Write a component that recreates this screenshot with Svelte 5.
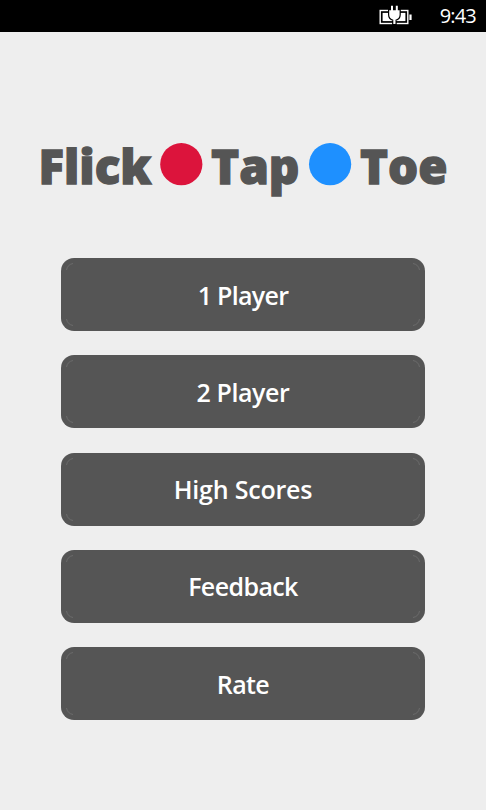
<script>
    const menuItems = [
        { label: "1 Player", spacing: -0.7 },
        { label: "2 Player", spacing: -0.4 },
        { label: "High Scores", spacing: -0.2 },
        { label: "Feedback", spacing: -0.6 },
        { label: "Rate", spacing: -0.6 },
    ];
    let time = "9:43";
</script>

<div class="phone">
    <header>
        <svg class="battery" width="34" height="22" viewBox="0 0 34 22">
            <rect x="1.2" y="7.5" width="27.6" height="13" fill="none" stroke="#fff" stroke-width="1.4" />
            <rect x="3.6" y="9.9" width="22.8" height="8.2" fill="#fff" />
            <rect x="30.4" y="11.5" width="2.2" height="5.5" fill="#fff" />
            <path
                d="M12 2.7v4.5h-1.8v4.6c0 2.4 1.6 4.3 4.1 4.9V21h2.2v-4.3c2.5-.6 4.1-2.5 4.1-4.9V7.2h-1.8V2.7h-2v4.5h-2.8V2.7z"
                fill="#fff"
                stroke="#000"
                stroke-width="2.4"
                paint-order="stroke"
            />
        </svg>
        <span class="time">{time}</span>
    </header>

    <main>
        <svg class="logo" width="410" height="64" viewBox="38 138 410 64" role="img" aria-label="Flick Tap Toe">
            <text x="38.4" y="184" textLength="113" lengthAdjust="spacingAndGlyphs">Flick</text>
            <circle cx="181.3" cy="164.2" r="21.1" fill="#dc143c" />
            <text x="211" y="184" textLength="88.5" lengthAdjust="spacingAndGlyphs">Tap</text>
            <circle cx="330.1" cy="164.2" r="21.1" fill="#1e90ff" />
            <text x="360" y="184" textLength="87.5" lengthAdjust="spacingAndGlyphs">Toe</text>
        </svg>

        <nav>
            {#each menuItems as { label, spacing }}
                <button>
                    <span class="inner" style="letter-spacing: {spacing}px">{label}</span>
                    <svg class="corners" viewBox="0 0 364 73">
                        <path d="M5.5 12Q6.5 6.5 12 5.5M352 5.5q5.500 1 6.500 6.500M358.500 61q-1 5.500-6.500 6.500M12 67.500q-5.500-1-6.500-6.500" />
                    </svg>
                </button>
            {/each}
        </nav>
    </main>
</div>

<style>
    :global(body) {
        margin: 0;
        background: #eee;
    }
    .phone {
        width: 486px;
        height: 810px;
        overflow: hidden;
        background: #eee;
        font-family: "Open Sans", "Noto Sans", sans-serif;
    }
    header {
        display: flex;
        justify-content: flex-end;
        box-sizing: border-box;
        height: 32px;
        padding-right: 10px;
        background: #000;
        color: #fff;
    }
    .battery {
        margin: 3px 27px 0 0;
    }
    .time {
        font-size: 20px;
        line-height: 32px;
        letter-spacing: -0.8px;
    }
    main {
        display: flex;
        flex-direction: column;
        align-items: center;
        padding-top: 106px;
    }
    .logo {
        overflow: visible;
    }
    .logo text {
        fill: #555;
        stroke: #555;
        stroke-width: 1.3px;
        font-size: 48px;
        font-weight: 800;
    }
    nav {
        display: flex;
        flex-direction: column;
        gap: 24.2px;
        margin-top: 56.3px;
    }
    button {
        position: relative;
        width: 364px;
        height: 73px;
        padding: 0;
        border: 0;
        border-radius: 13px;
        background: #555;
        color: #fff;
        font: 600 25px "Open Sans", "Noto Sans", sans-serif;
    }
    .corners {
        position: absolute;
        inset: 0;
        fill: none;
        stroke: #707070;
        stroke-width: 0.8px;
    }
</style>
